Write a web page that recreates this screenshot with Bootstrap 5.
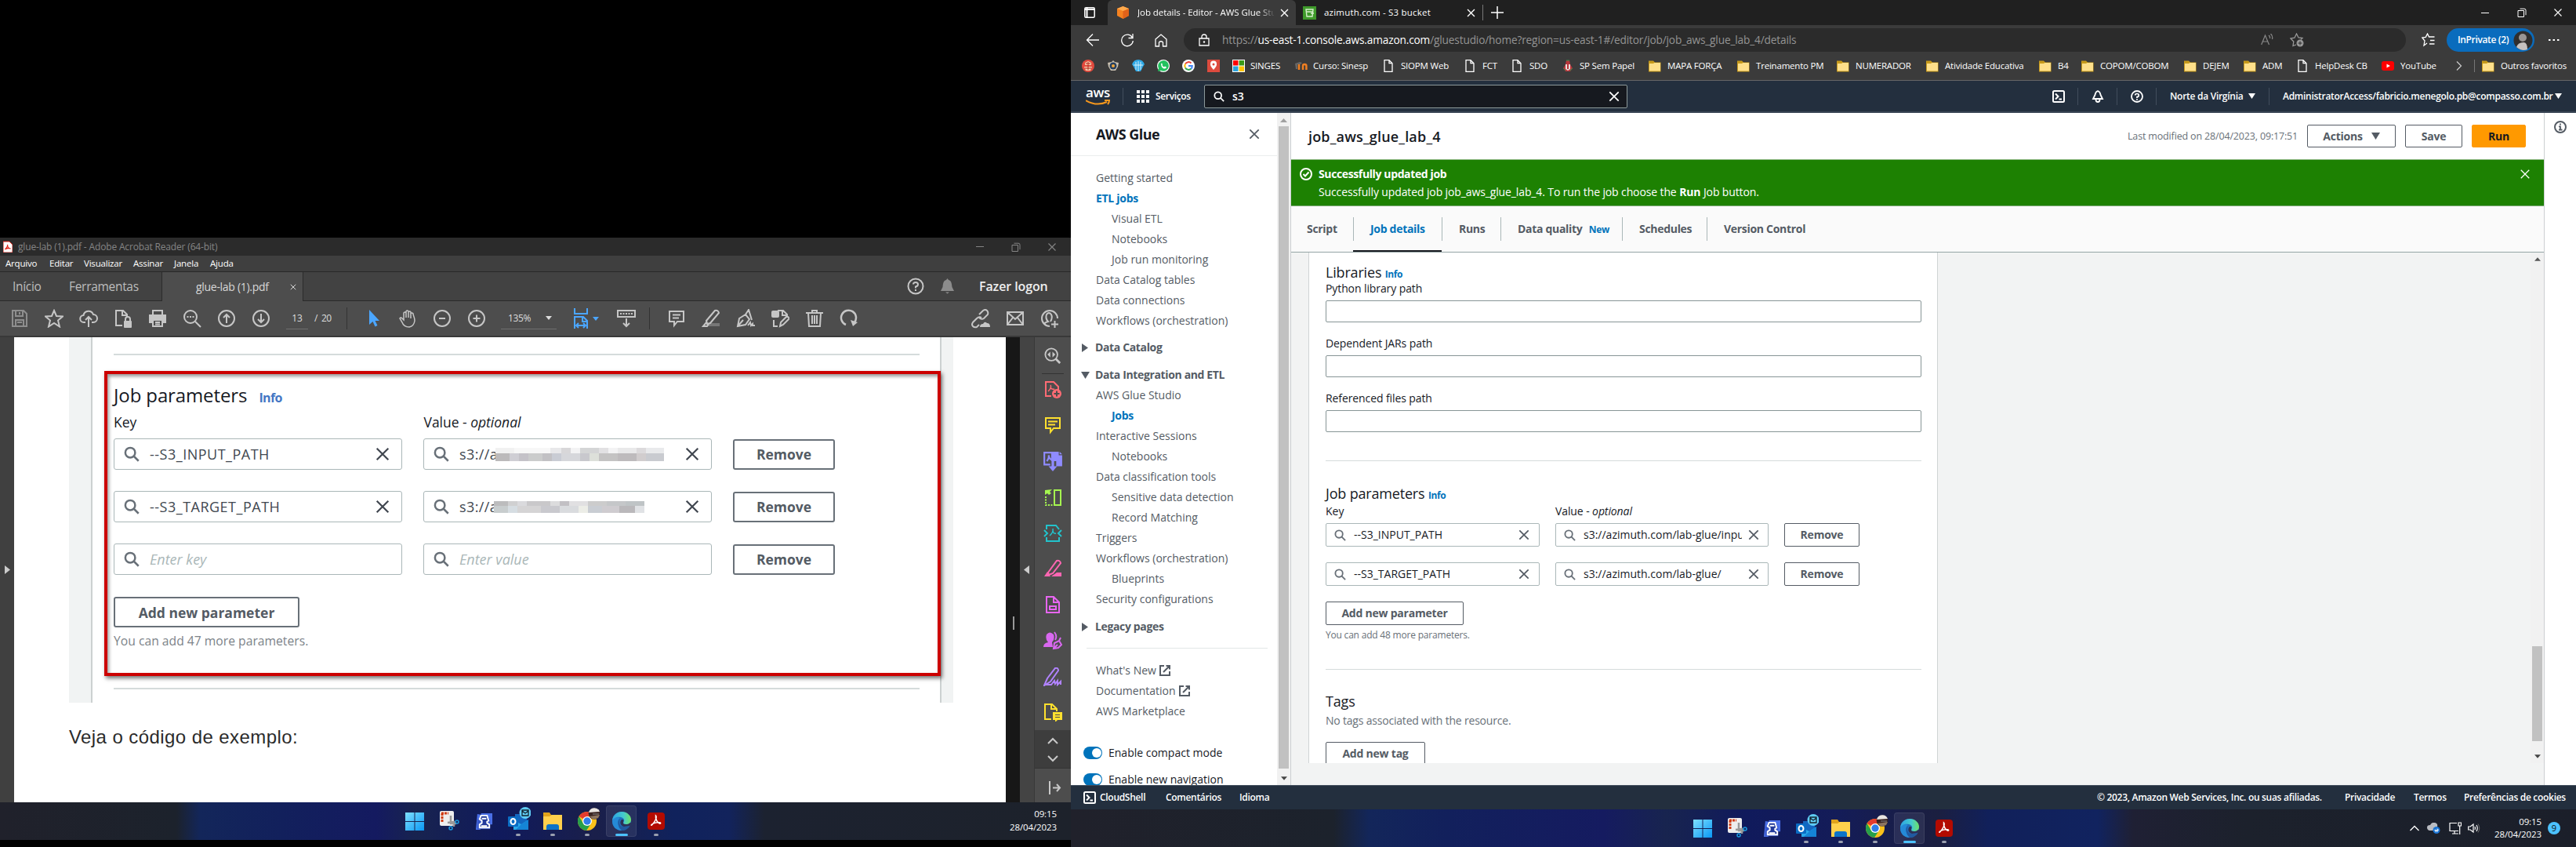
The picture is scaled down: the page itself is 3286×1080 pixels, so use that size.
<!DOCTYPE html>
<html lang="pt-BR">
<head>
<meta charset="utf-8">
<title>Job details - Editor - AWS Glue Studio</title>
<link rel="stylesheet" href="https://cdn.jsdelivr.net/npm/bootstrap@5.3.0/dist/css/bootstrap.min.css">
<style>
*{box-sizing:border-box}
html,body{width:3286px;height:1080px;overflow:hidden;background:#000}
body{font-family:"Open Sans","Noto Sans",sans-serif;font-size:14px;line-height:20px;color:#16191f;margin:0}
svg{display:block;flex:none}
.sprites{position:absolute;width:0;height:0}
.ln{fill:none;stroke:currentColor;stroke-width:2}
.nw{white-space:nowrap}
.g{display:grid;align-items:center;white-space:nowrap}
.left-mon{width:1366px;height:1080px;padding-top:303px;background:#000}
.right-mon{width:1920px;height:1080px}
/* ---- Acrobat window ---- */
.ac-title{height:23px;background:#2b2b2b;color:#858585;font-size:12px;letter-spacing:-.16px;grid-template-columns:23px 1218px 45px 46px 1fr;padding-left:0}
.ac-menu{height:20px;background:#3f3f3f;color:#fff;font-size:11.5px;letter-spacing:-.2px;grid-template-columns:56px 44px 63px 52px 46px 1fr;padding-left:7px}
.ac-tabs{height:38px;background:#424242;border-top:1px solid #282828;color:#bdbdbd;font-size:15.5px;letter-spacing:-.3px}
.ac-tabs .tabs-l{width:207px;padding-left:16px;border-bottom:1px solid #2b2b2b;border-right:1px solid #2b2b2b;grid-template-columns:72px 1fr}
.ac-tabs .tab-on{width:180px;background:#4d4d4d;padding-left:43px;color:#d8d8d8;border-right:1px solid #2b2b2b;grid-template-columns:120px 1fr;font-size:14px}
.ac-tabs .tabs-r{width:979px;border-bottom:1px solid #2b2b2b;padding-left:770px;grid-template-columns:42px 50px 1fr;color:#c6c6c6}
.logon{font-size:16px;color:#eee;font-weight:600;letter-spacing:-.1px}
.ac-tools{height:46px;background:#4d4d4d;border-bottom:2px solid #393939;color:#c6c6c6;grid-template-columns:3px repeat(8,44px) 87px 12px repeat(4,44px) 9px 71px 10px 50px 58px 13px repeat(6,44px) 124px repeat(3,44px)}
.ac-tools>svg{justify-self:center}
.vsep{width:1px;height:28px;background:#333}
.pgno{font-size:12px;color:#ddd;grid-template-columns:10px 28px 8px 9px 1fr;height:28px}
.uln{border-bottom:1px solid #6f6f6f;height:28px;line-height:28px;text-align:center}
.zoomsel{border-bottom:1px solid #6f6f6f;height:28px;display:flex;align-items:center;padding-left:9px;font-size:12px;letter-spacing:-.4px;color:#ddd}
.caret{width:0;height:0;border:4px solid transparent;border-top:5px solid currentColor;border-bottom:0}
.ac-body{height:593px;background:#fff}
.ac-l{width:18px;background:#404040;padding-left:6px;color:#ccc}
.ac-page{width:1265px;padding-left:70px}
.shot{width:1128px;height:466px;background:#f1f3f3;padding:0 15px 0 28px}
.shot-in{background:#fff;border:solid #ccd1d1;border-width:0 2px;height:466px;padding:21px 26px 0 27px}
.rule{height:2px;background:#d5dbdb}
.redbox{margin:20px -27px 15px -12px;height:389px;border:4px solid #cc0000;box-shadow:2px 3px 5px #0008,inset 2px 3px 4px #0006;padding:14px 0 0 8px}
.pdf-h{font-size:24px;line-height:26px;height:29px;letter-spacing:-.12px}
.pdf-h b{font-size:16px;line-height:1;color:#4477c4;margin-left:9px;letter-spacing:-.6px}
.pdf-lb{font-size:17.5px;line-height:24px;margin-top:6px;grid-template-columns:395.5px 1fr}
.pdf-lb span{letter-spacing:-.02px}
.pdf-row{grid-template-columns:368px 368px 130px;column-gap:27px;height:40px}
.pbox{height:40px;border:1.5px solid #aab7b8;border-radius:3px;display:flex;align-items:center;padding-left:12px;font-size:18px;color:#414750;background:#fff}
.pbox .q{color:#687078;margin-right:13px}
.pbox i{color:#aab7b8}
.pkey{width:288px;letter-spacing:.5px}
.pval{width:55px;letter-spacing:.4px}
.pbtn{height:39px;border:2px solid #687078;border-radius:3px;color:#545b64;font-weight:700;font-size:17.5px;display:flex;align-items:center;justify-content:center;background:#fff;white-space:nowrap}
.mosaic{width:215px;height:17px;margin-left:-9px}
.m1{background:linear-gradient(90deg,#f1f1f1 24px,#f7f7f7 24px 70px,#e8e8ea 70px 84px,#d8d7d9 84px 96px,#f3f3f4 96px 108px,#d4d5d6 108px 132px,#e2e1e3 132px 144px,#f3f3f4 144px 156px,#e9e9ea 156px 180px,#dcdadc 180px 192px,#e9eaec 192px) 0 0/100% 7px no-repeat,linear-gradient(90deg,#bcbabb 18px,#cfced4 18px 30px,#c4c2c8 30px 42px,#cbcccc 42px 60px,#c2c1c4 60px 72px,#c9ccd4 72px 84px,#d6d7db 84px 108px,#c8c8cd 108px 120px,#dde0da 120px 132px,#c4c3c3 132px 156px,#bebbbd 156px 180px,#d1cdce 180px 192px,#c9cbd0 192px) 0 7px/100% 10px no-repeat}
.m2{width:192px;height:15px;margin-left:-11px;background:linear-gradient(90deg,#bcbcbd 18px,#d0d0d1 18px 30px,#dadadd 30px 42px,#c9c8ca 42px 72px,#dcdcdd 72px 84px,#c2c0c4 84px 96px,#e1e0e2 96px 120px,#ccc 120px 144px,#c5c7c9 144px 168px,#bfc4c6 168px) 0 0/100% 6px no-repeat,linear-gradient(90deg,#c8cdce 18px,#d6dde2 18px 30px,#d5d4d5 30px 60px,#c9c9ce 60px 84px,#d9dbde 84px 108px,#ecede7 108px 120px,#c9cdd3 120px 138px,#cfccd0 138px 160px,#bab8bb 160px 180px,#e0e2e5 180px) 0 6px/100% 9px no-repeat}
.veja{font-family:"Liberation Sans",Arial,sans-serif;font-size:24px;line-height:28px;margin-top:30px;color:#2b2b2b;letter-spacing:.42px}
.ac-sb{width:18px;background:#171717;padding-left:9px}
.ac-h{width:19px;background:#444;border-right:1px solid #383838;color:#ccc;padding-left:5px}
.ac-side{width:46px;background:#4d4d4d;display:flex;flex-direction:column;align-items:center;color:#c8c8c8}
.ac-side .sl{height:45.75px;display:flex;align-items:center}
.ac-side .dk{width:46px;height:49px;background:#3d3d3d;border-bottom:1px solid #333;display:flex;flex-direction:column;align-items:center;justify-content:space-between;padding:9px 0 7px}
/* ---- taskbars ---- */
.task{height:48px;position:relative;color:#fff}
.t1{background:linear-gradient(90deg,#20212b 0,#1c222c 225px,#13265a 255px,#12205c 360px,#141a60 480px,#18234f 530px,#101a5c 640px,#1a1f4a 760px,#10225c 860px,#12235c 930px,#1c2230 975px,#1d222b 1366px)}
.t2{background:linear-gradient(90deg,#20212b 0,#1c222c 335px,#13265a 380px,#12205c 480px,#151b60 680px,#18244f 760px,#101a5c 860px,#141c58 980px,#1b1f40 1105px,#11205a 1170px,#11235f 1310px,#1f2034 1355px,#1c212c 1500px,#1b1f2a 1920px)}
.ti{width:44px;height:48px;display:flex;align-items:center;justify-content:center;position:relative}
.ti.run::after{content:"";position:absolute;bottom:5px;left:19px;width:6px;height:3px;border-radius:2px;background:#9aa0b0}
.ti.act::before{content:"";position:absolute;left:2px;top:4px;width:39px;height:40px;border-radius:4px;background:#ffffff14;border:1px solid #ffffff14}
.ti.act::after{left:14px;width:16px;background:#4cc2ff}
.clk{font-size:11.5px;line-height:16.5px;text-align:right;letter-spacing:-.1px}
/* ---- Edge ---- */
.e-tabs{height:32px;background:#202020;color:#fff;font-size:11.5px;letter-spacing:-.05px}
.e-tab{width:240px;background:#3b3b3b;border-radius:6px 6px 0 0;grid-template-columns:26px 182px 1fr;padding-left:12px}
.fade-t{overflow:hidden;width:174px;-webkit-mask-image:linear-gradient(90deg,#000 155px,transparent 176px)}
.e-tab2{width:238px;grid-template-columns:27px 182px 1fr;padding-left:9px;border-right:0}
.e-bar{height:34px;background:#3b3b3b;color:#fff;padding-top:4px}
.e-url{width:1559px;height:30px;border-radius:15px;background:#2b2b2b;color:#949494;font-size:13.7px;letter-spacing:-.16px;grid-template-columns:49px 1325px 37px 1fr;padding:0 12px 0 0}
.e-priv{width:112px;height:30px;border-radius:15px;background:#0a6cbd;font-size:12px;letter-spacing:-.35px;padding-left:14px;grid-template-columns:71px 1fr}
.e-fav{height:37px;background:#3b3b3b;border-bottom:1px solid #666;color:#fff;font-size:11.5px;letter-spacing:-.2px;padding-left:14px;grid-template-columns:32px 32px 32px 32px 32px 32px 23px 57px 23px 90px 22px 82px 22px 38px 22px 42px 22px 88px 24px 89px 24px 103px 24px 90px 24px 120px 24px 30px 24px 107px 24px 52px 24px 45px 22px 85px 24px 71px 23px 10px 24px 1fr}
/* ---- AWS console ---- */
.a-nav{height:41px;background:#232f3e;border-bottom:2px solid #3a4655;color:#fff;font-size:12px;padding-left:19px;font-weight:600;grid-template-columns:47px 18px 24px 62px 540px 542px 32px 18px 32px 18px 32px 18px 100px 26px 18px 347px 1fr}
.a-nav .vs{width:1px;height:22px;background:#414d5c}
.awslogo{width:33px;height:23px;color:#fff;font-size:17px;line-height:14px;letter-spacing:-.3px}
.awslogo svg{margin-top:2px}
.a-search{height:30px;background:#16191f;border:1px solid #8d9a9b;border-radius:2px;font-size:14px;grid-template-columns:24px 480px 1fr;padding-left:11px}
.a-main{height:857px;background:#fff}
.a-side{width:263px;height:857px;overflow:hidden;color:#545b64}
.a-side .hd{height:55px;border-bottom:1px solid #eaeded;padding-left:32px;grid-template-columns:195px 1fr;font-size:18px;font-weight:700;color:#16191f;letter-spacing:-.55px}
.a-side ul{list-style:none;margin:0;padding:0 0 0 32px}
.a-side li{height:26px;line-height:26px;white-space:nowrap}
.a-side li.in{padding-left:20px}
.a-side li.on{color:#0073bb;font-weight:700;letter-spacing:-.3px}
.sec{font-weight:700;height:26px;line-height:26px;letter-spacing:-.36px;display:flex;align-items:center;padding-left:13px}
.sec svg{margin-right:7px;width:11px}
.tg{display:flex;align-items:center;height:34px;padding-left:16px;color:#16191f;white-space:nowrap}
.tg i{width:24px;height:16px;border-radius:8px;background:#0073bb;margin-right:8px;padding:2px 1px 0 11px}
.tg i::before{content:"";display:block;width:12px;height:12px;border-radius:6px;background:#fff}
.sbar{width:17px;background:#f1f1f1;display:flex;flex-direction:column;align-items:center}
.thumb{width:13px;background:#c1c1c1}
.a-cont{width:1600px;border-left:1px solid #ccd0d2;border-right:1px solid #ccd0d2;background:#f2f3f3}
.a-head{height:59px;background:#fff;padding-left:22px;grid-template-columns:1045px 229px 125px 85px 1fr;font-size:18px;font-weight:600}
.a-head .mut{font-size:12.5px;font-weight:400;letter-spacing:-.16px}
.abtn{height:29px;border:1px solid #545b64;border-radius:2px;background:#fff;color:#545b64;font-size:14px;font-weight:700;letter-spacing:-.22px;display:flex;align-items:center;justify-content:center;white-space:nowrap}
.flash{height:60px;background:#1d8102;color:#fff;border-top:1px solid #86b37a;border-bottom:1px solid #7aa874;padding:6px 17px 0 11px;line-height:23px;letter-spacing:-.12px}
.a-tabs{height:59px;background:#fafafa;border-bottom:1px solid #95a5a6;color:#545b64;font-weight:700;letter-spacing:-.3px;padding-left:20px;grid-template-columns:59px 113px 75px 155px 108px 1fr}
.a-tabs>div{height:58px;line-height:58px}
.a-tabs .s{background:linear-gradient(#aab7b8,#aab7b8) 0 14px/1px 30px no-repeat;padding-left:22px}
.a-tabs .on{color:#0073bb;box-shadow:inset 0 -2px #16191f}
.scroller{height:651px;overflow:hidden}
.panel{width:803px;margin-left:22px;background:#fff;border:solid #d0d4d5;border-width:0 1px;padding:14px 20px 0 21px;height:651px;overflow:hidden}
.h18{font-size:18px;line-height:22px;height:22px;letter-spacing:-.18px;white-space:nowrap}
.h18 b{font-size:12px;line-height:1;color:#0073bb;letter-spacing:-.4px}
.lbl{line-height:20px;margin-bottom:5px;letter-spacing:-.1px}
.tin{height:28px;border:1px solid #879596;border-radius:2px;margin-bottom:17px}
.prow{grid-template-columns:273px 272px 96px;column-gap:20px;height:30px;margin-bottom:20px}
.prow .abtn{height:30px}
.fbox{height:30px;border:1px solid #aab7b8;border-radius:2px;padding-left:10px;grid-template-columns:25px 202px 8px 1fr;overflow:hidden}
.fbox span{overflow:hidden;letter-spacing:0}
.clr{color:#545b64}
.mut{color:#687078}
.a-info{width:40px;padding:10px 0 0 12px;color:#545b64}
.a-foot{height:31px;background:#232f3e;border-top:1px solid #414d5c;color:#fff;font-size:12px;font-weight:600;letter-spacing:-.3px;padding-left:16px;grid-template-columns:21px 84px 94px 1094px 316px 88px 64px 1fr}
.b4{font-weight:600}
</style>
</head>
<body>
<svg class="sprites">
 <defs>
  <linearGradient id="wg" x1="0" y1="0" x2="1" y2="1"><stop offset="0" stop-color="#7fe0ff"/><stop offset="1" stop-color="#0a98f5"/></linearGradient>
  <linearGradient id="eg" x1="0" x2="1"><stop offset="0" stop-color="#1b9de2"/><stop offset=".6" stop-color="#35c6c9"/><stop offset="1" stop-color="#63e05a"/></linearGradient>
 </defs>
 <symbol id="q" viewBox="0 0 16 16"><circle cx="6.5" cy="6.5" r="5" fill="none" stroke="currentColor" stroke-width="2"/><path d="M10 10l5 5" stroke="currentColor" stroke-width="2"/></symbol>
 <symbol id="x" viewBox="0 0 16 16"><path d="M1.5 1.5l13 13M14.500 1.500l-13 13" stroke="currentColor" stroke-width="2" fill="none"/></symbol>
 <symbol id="xt" viewBox="0 0 16 16"><path d="M2 2l12 12M14 2L2 14" stroke="currentColor" stroke-width="1.500" fill="none"/></symbol>
 <symbol id="rest" viewBox="0 0 12 12"><path d="M1 3.500h7.500V11.500H1zM3.500 1.200h5.500q2 0 2 2v6" fill="none" stroke="currentColor"/></symbol>
 <symbol id="fold" viewBox="0 0 16 16"><path d="M0 1.500h6l2 2h7.500v12H0z" fill="#c79a1b"/><path d="M1 5h5l1.500-1H15v10.500H1z" fill="#ffe08a"/></symbol>
 <symbol id="pg" viewBox="0 0 12 16"><path d="M1 .7h6l4 4v10.600H1zM7 .7v4h4" fill="none" stroke="#fff" stroke-width="1.300"/></symbol>
 <symbol id="ext" viewBox="0 0 14 14"><path d="M6 1H1v12h12V8M8.500 1H13v4.500M13 1L5 9" fill="none" stroke="currentColor" stroke-width="2"/></symbol>
 <symbol id="shell" viewBox="0 0 16 16"><rect x="1" y="1" width="14" height="14" rx="1.500" fill="none" stroke="#fff" stroke-width="2"/><path d="M4 4.500L7.500 8 4 11.500M8.500 11.500H12" stroke="#fff" stroke-width="2" fill="none"/></symbol>
 <symbol id="w-win" viewBox="0 0 24 24"><path d="M0 1h11.500v11H0zM12.500 1H24v11H12.500zM0 13h11.500v11H0zM12.500 13H24v11H12.500z" fill="url(#wg)"/></symbol>
 <symbol id="w-snip" viewBox="0 0 26 26"><rect x="1" y="0" width="18" height="19" rx="2" fill="#eee"/><path d="M3 3h9M4 3v11" stroke="#d13b12" stroke-width="3" stroke-dasharray="3 1" fill="none"/><path d="M15 6v10h7M11 15l8-1v6" fill="none" stroke="#999" stroke-width="2.500"/><circle cx="23" cy="14" r="2" fill="none" stroke="#1a9be0" stroke-width="1.500"/><circle cx="15" cy="22" r="2" fill="none" stroke="#1a9be0" stroke-width="1.500"/></symbol>
 <symbol id="w-robo" viewBox="0 0 24 24"><path d="M3 2l6 1L7 23H1zM8 1h15v15H8z" fill="#4a6fe6"/><path d="M3 9h17v13H3z" fill="#3655c8"/><path d="M8 4h8l2 7-2 1v2l3 2v4H6v-4l3-2v-3L6 9z" fill="#223a9a" stroke="#fff" stroke-width="2"/><path d="M9 8h6M8 18h8" stroke="#fff" stroke-width="2"/></symbol>
 <symbol id="w-out" viewBox="0 0 32 32"><path d="M12 9h15v16H12z" fill="#1466c0"/><path d="M10 17l10 5 9-6v13H10z" fill="#28a8ea"/><path d="M20 22l9-6v13H13z" fill="#1584d6"/><rect x="3" y="12" width="13" height="13" rx="1" fill="#0a6cc4"/><ellipse cx="9.500" cy="18.500" rx="3" ry="3.600" fill="none" stroke="#fff" stroke-width="2"/><circle cx="25" cy="7.500" r="7.500" fill="#60cdf5"/><path d="M21 4h8v7h-8zM21 5l4 3 4-3" fill="none" stroke="#12222e" stroke-width="1.300"/></symbol>
 <symbol id="w-fold" viewBox="0 0 24 24"><path d="M0 1h8l2 3h14v6H0z" fill="#e0a21b"/><path d="M0 6h8l3-2h13v19H0z" fill="#ffd04c"/><path d="M4 23v-4q0-3 3-3h10q3 0 3 3v4z" fill="#0c73c8"/></symbol>
 <symbol id="w-chr" viewBox="0 0 30 30"><circle cx="13" cy="17" r="12" fill="#fbc11a"/><path d="M13 17L2.600 11A12 12 0 0 1 23.400 11H13z" fill="#e33b2e"/><path d="M2.600 11A12 12 0 0 0 12 29l6-9-5-3-5 3z" fill="#26a04b"/><circle cx="13" cy="17" r="6" fill="#fff"/><circle cx="13" cy="17" r="4.700" fill="#2f7de9"/><circle cx="22" cy="7.500" r="7.300" fill="#3a2522"/><path d="M15 6a7.300 7.300 0 0 1 14-1z" fill="#e9e5e2"/><path d="M16 11l13-2-2 4-6 2z" fill="#8d7560"/><path d="M20 8h8" stroke="#888"/></symbol>
 <symbol id="w-edge" viewBox="0 0 24 24"><circle cx="12" cy="12" r="12" fill="#0c63b8"/><path d="M0 12c1-5 6-6 10-4-4 2-5 10 4 15l-2 1C5 24 0 19 0 12z" fill="#1380d4"/><path d="M10 9c-3 5 0 11 6 10l6-1c-3 5-7 6-10 6-5-4-6-12-2-15z" fill="#0f4b98"/><path d="M24 14c0 2-1 4-2 4l-7 1c-5-1-6-6-3-9l2 0c1 2-1 3 1 5z" fill="#1b1f48"/><path d="M0 11C1 4 6 0 12 0c7 0 12 5 12 10 0 4-3 6-6.500 6-3 0-4-1-3-2.500C16 11 15 8 11 7 6 6 1 8 0 12z" fill="url(#eg)"/></symbol>
 <symbol id="w-pdf" viewBox="0 0 22 22"><rect width="22" height="22" rx="4" fill="#b30b00"/><path d="M10.500 4c2 2-1 8-5 12-2 1 0-2 5-3 4-1 7 0 6 1s-5-2-6-7c0-2 0-3 0-3z" fill="none" stroke="#fff" stroke-width="1.500"/></symbol>
</svg>

<div class="d-flex">
<!-- left monitor -->
<section class="left-mon">
 <div class="ac-title g"><svg width="12" height="15" style="margin-left:4px" viewBox="0 0 12 15"><path d="M0 1h8l4 4v10H0z" fill="#fff" stroke="#e1251b"/><path d="M5.500 5c1 2-1 4-3 6 2-1.500 4-2 7-1-2 0-4-2-4-5z" fill="none" stroke="#e1251b" stroke-width="1.300"/></svg><span>glue-lab (1).pdf - Adobe Acrobat Reader (64-bit)</span><svg width="12" height="12" style="margin-left:4px" viewBox="0 0 12 12"><path d="M0 5.500h10" stroke="currentColor"/></svg><svg width="12" height="12" style="margin-left:4px"><use href="#rest"/></svg><svg width="12" height="12" style="margin-left:4px"><use href="#xt"/></svg></div>
 <div class="ac-menu g"><span>Arquivo</span><span>Editar</span><span>Visualizar</span><span>Assinar</span><span>Janela</span><span>Ajuda</span></div>
 <div class="ac-tabs d-flex">
  <div class="tabs-l g"><span>Início</span><span>Ferramentas</span></div>
  <div class="tab-on g"><span>glue-lab (1).pdf</span><svg width="8" height="8"><use href="#x"/></svg></div>
  <div class="tabs-r g"><svg width="22" height="22" viewBox="0 0 22 22"><circle cx="11" cy="11" r="9.500" class="ln"/><path d="M8 8.500q0-2.500 3-2.500t3 2.500-3 3v2M11 15v2" class="ln"/></svg><svg width="19" height="20" viewBox="0 0 19 20"><path d="M9.500 0l1.500 2c4 1 4 5 4.500 9L18 16H1l2.500-5c.5-4 .5-8 4.500-9zM7 17.500h5l-2.500 2z" fill="#8c8c8c"/></svg><span class="logon">Fazer logon</span></div>
 </div>
 <div class="ac-tools g"><i></i>
  <svg width="24" height="24" viewBox="0 0 24 24" color="#8e8e8e"><path d="M3 2h14l4 4v16H3zM7 2v7h9V2M12 4v3M7 22v-8h10v8M9 17h6" class="ln"/></svg>
  <svg width="24" height="24" viewBox="0 0 24 24"><path d="M12 2l3 7 8 .5-6 5 2 8-7-4.500-7 4.500 2-8-6-5L9 9z" class="ln"/></svg>
  <svg width="24" height="24" viewBox="0 0 24 24"><path d="M8 17H6a4.500 4.500 0 0 1-.5-9 6.500 6.500 0 0 1 12.500-1 5 5 0 0 1 0 10h-2M12 23V11M8 14l4-4 4 4" class="ln"/></svg>
  <svg width="24" height="24" viewBox="0 0 24 24"><path d="M11 21H3V2h9l5 5v3M11 2v6h6" class="ln"/><rect x="13" y="15" width="10" height="9" rx="1" fill="currentColor"/><path d="M15 15v-2a3 3 0 0 1 6 0v2" class="ln"/></svg>
  <svg width="24" height="24" viewBox="0 0 24 24"><path d="M6 7V2h12v5" class="ln"/><path d="M1 7h22v11h-4v-4H5v4H1z" fill="currentColor"/><path d="M6 14h12v8H6zM9 17h6M9 19.500h6" class="ln"/></svg>
  <svg width="24" height="24" viewBox="0 0 24 24"><circle cx="10" cy="10" r="8" class="ln"/><path d="M16 16l7 7M5.500 10h2M9 10h2M12.500 10h2" class="ln"/></svg>
  <svg width="24" height="24" viewBox="0 0 24 24"><circle cx="12" cy="12" r="10" class="ln"/><path d="M12 18V7M8 11l4-4 4 4" class="ln"/></svg>
  <svg width="24" height="24" viewBox="0 0 24 24"><circle cx="12" cy="12" r="10" class="ln"/><path d="M12 6v11M8 13l4 4 4-4" class="ln"/></svg>
  <div class="pgno g"><i></i><span class="uln">13</span><i></i><span>/</span><span style="letter-spacing:-.5px">20</span></div>
  <i class="vsep"></i>
  <svg width="24" height="24" viewBox="0 0 24 24"><path d="M7 1v19l4.500-4 3 6.500 3-1.500-3-6H20z" fill="#4ba6ff"/></svg>
  <svg width="24" height="24" viewBox="0 0 24 24"><path d="M7 14V5q1.500-2 3 0v6V3q1.500-2 3 0v8V4q1.500-2 3 0v8V6q1.500-2 3 0c0 3 2 4 2 9q-1 7-7 8-7 0-9-6l-3-5q1-2 3 0z" class="ln" style="stroke-width:1.500"/></svg>
  <svg width="24" height="24" viewBox="0 0 24 24"><circle cx="12" cy="12" r="10" class="ln"/><path d="M8 12h8" class="ln"/></svg>
  <svg width="24" height="24" viewBox="0 0 24 24"><circle cx="12" cy="12" r="10" class="ln"/><path d="M7.500 12h9M12 7.500v9" class="ln"/></svg>
  <i></i><div class="zoomsel">135%<i class="caret" style="margin-left:19px"></i></div><i></i>
  <div class="d-flex align-items-center" style="color:#4ba6ff;padding-left:12px"><svg width="19" height="26" viewBox="0 0 19 26"><path d="M1 0v7h16V0M1 26V11h11l5 5v10M11 11v6h6M4 22h11M6 19l-3 3 3 3M12 19l3 3-3 3" class="ln"/></svg><i class="caret" style="margin-left:5px"></i></div>
  <svg width="24" height="24" viewBox="0 0 24 24"><rect x="1" y="2" width="22" height="8" class="ln"/><path d="M4 6h16" stroke="currentColor" stroke-width="2" stroke-dasharray="2 1.500"/><path d="M12 12v10M8 18l4 4 4-4" class="ln"/></svg>
  <i class="vsep"></i>
  <svg width="24" height="24" viewBox="0 0 24 24"><path d="M3 3h18v13h-8l-4 5v-5H3zM7 7.500h10M7 11.500h8" class="ln"/></svg>
  <svg width="24" height="24" viewBox="0 0 24 24"><path d="M10 18h13v4H6z" fill="#777"/><path d="M6 15L17 2q4-1 5 3L11 18l-4 1zM7 16l-5 6h5l2-3" class="ln"/></svg>
  <svg width="24" height="24" viewBox="0 0 24 24"><path d="M2 22L4 12l8-5 5 6-5 7zM12 7l4-6 4 13M2 22l7-8M15 21l3-4 1 4 2-2v2h3" class="ln"/></svg>
  <svg width="24" height="24" viewBox="0 0 24 24"><rect x="1" y="2" width="10" height="9" rx="2" fill="currentColor"/><path d="M9 2h7l5 5v4M15 2v6h5M4 14v8h5M12 22l1-5 8-8 3 3-8 8z" class="ln"/></svg>
  <svg width="24" height="24" viewBox="0 0 24 24"><path d="M1 5h22M9 5V2h6v3M4 5l1 17h14l1-17M9 8v11M12 8v11M15 8v11" class="ln"/></svg>
  <svg width="24" height="24" viewBox="0 0 24 24"><path d="M8 20A9.500 9.500 0 1 1 19 17" class="ln" style="stroke-width:2.500"/><path d="M14 14l9 3-6 5z" fill="currentColor"/></svg>
  <i></i>
  <svg width="26" height="26" viewBox="0 0 26 26"><path d="M11 8l5-5q3-2 5 0t1 5l-5 5q-3 2-6-1M14 12q-3-2-6 1l-5 5q-2 3 0 5t5 1l3-3" class="ln"/><path d="M12 24q0-4 4-4 2-4 5-1 4 0 4 5z" fill="currentColor"/></svg>
  <svg width="24" height="24" viewBox="0 0 24 24"><path d="M2 4h20v16H2zM2 4l10 9L22 4M2 20l7-9M22 20l-7-9" class="ln"/></svg>
  <svg width="24" height="24" viewBox="0 0 24 24"><path d="M12 22A10 10 0 1 1 22 12" class="ln"/><path d="M5 19q1-2 5-3-4-4-2-9 3-4 6 0 2 4-1 9" class="ln"/><path d="M14 19.500h9M18.500 15v9" class="ln"/></svg>
 </div>
 <div class="ac-body d-flex">
  <div class="ac-l"><svg width="7" height="11" style="margin-top:291px" viewBox="0 0 7 11"><path d="M0 0l7 5.500L0 11z" fill="#ccc"/></svg></div>
  <div class="ac-page">
   <div class="shot"><div class="shot-in">
    <div class="rule"></div>
    <div class="redbox">
     <div class="pdf-h nw">Job parameters <b>Info</b></div>
     <div class="pdf-lb g"><span>Key</span><span>Value - <i>optional</i></span></div>
     <div class="pdf-row g" style="margin-top:9px">
      <div class="pbox"><svg class="q" width="20" height="20"><use href="#q"/></svg><span class="pkey">--S3_INPUT_PATH</span><svg width="18" height="18"><use href="#x"/></svg></div>
      <div class="pbox"><svg class="q" width="20" height="20"><use href="#q"/></svg><span class="pval">s3://a</span><i class="mosaic m1"></i><svg width="18" height="18" style="margin-left:27px"><use href="#x"/></svg></div>
      <div class="pbtn">Remove</div></div>
     <div class="pdf-row g" style="margin-top:27px">
      <div class="pbox"><svg class="q" width="20" height="20"><use href="#q"/></svg><span class="pkey">--S3_TARGET_PATH</span><svg width="18" height="18"><use href="#x"/></svg></div>
      <div class="pbox"><svg class="q" width="20" height="20"><use href="#q"/></svg><span class="pval">s3://a</span><i class="mosaic m2"></i><svg width="18" height="18" style="margin-left:52px"><use href="#x"/></svg></div>
      <div class="pbtn">Remove</div></div>
     <div class="pdf-row g" style="margin-top:27px">
      <div class="pbox"><svg class="q" width="20" height="20"><use href="#q"/></svg><i>Enter key</i></div>
      <div class="pbox"><svg class="q" width="20" height="20"><use href="#q"/></svg><i>Enter value</i></div>
      <div class="pbtn">Remove</div></div>
     <div class="pbtn" style="width:237px;margin-top:28px">Add new parameter</div>
     <div class="nw" style="font-size:15.700px;line-height:22px;margin-top:6px;color:#7c8389">You can add 47 more parameters.</div>
    </div>
    <div class="rule"></div>
   </div></div>
   <div class="veja">Veja o código de exemplo:</div>
  </div>
  <div class="ac-sb"><div style="width:2px;height:17px;background:#999;margin-top:356px"></div></div>
  <div class="ac-h"><svg width="7" height="11" style="margin-top:291px" viewBox="0 0 7 11"><path d="M7 0L0 5.500 7 11z" fill="#ccc"/></svg></div>
  <div class="ac-side">
   <div class="sl"><svg width="22" height="22" viewBox="0 0 24 24"><circle cx="10" cy="11" r="8.500" class="ln"/><path d="M16 17l6 6" class="ln" style="stroke-width:3"/><path d="M8.500 7v8l-4-4zM11.500 7v8l4-4z" fill="currentColor"/></svg></div>
   <div style="width:28px;height:1px;background:#333;margin-bottom:-3px"></div>
   <div class="sl" style="color:#ff6b74"><svg width="24" height="24" viewBox="0 0 24 24"><path d="M10 20H3V2h10l6 6v4" class="ln"/><path d="M9 6c2 3-1 6-3 8M9 9q1 3 5 2" class="ln" style="stroke-width:1.500"/><circle cx="17" cy="17" r="6" fill="currentColor"/><path d="M13.500 17h7M17 13.500v7" stroke="#4d4d4d" stroke-width="2"/></svg></div>
   <div class="sl" style="color:#ffe02e"><svg width="24" height="24" viewBox="0 0 24 24"><path d="M3 3h18v13h-8l-4 5v-5H3zM6 7.500h12M6 11.500h9" class="ln"/></svg></div>
   <div class="sl" style="color:#8f8bff"><svg width="26" height="26" viewBox="0 0 24 24"><path d="M9 16H2V2h9v10" class="ln"/><path d="M5 12q3-4 2-7 1 5 4 5" class="ln"/><path d="M12 1h7v4h4v13h-7v-6h-4zM20 1l3 3h-3z" fill="currentColor"/><path d="M12 12v7" class="ln" style="stroke-width:3"/><path d="M7 18h10l-5 6z" fill="currentColor"/></svg></div>
   <div class="sl" style="color:#a5f650"><svg width="24" height="24" viewBox="0 0 24 24"><path d="M14 3h8v19h-8z" class="ln"/><path d="M3 11v11h9" class="ln" stroke-dasharray="2 1.500"/><path d="M2 3l9-1-3 3 2 2-3 2-2-2-3 2z" fill="currentColor"/></svg></div>
   <div class="sl" style="color:#22c3cc"><svg width="24" height="24" viewBox="0 0 24 24"><path d="M4 7V2h12l4 5M4 17v5h16v-5M1 8l4 4-4 4M23 8l-4 4 4 4" class="ln"/><path d="M12 6c1 5-2 7-4 9M12 9q1 4 4 3" class="ln" style="stroke-width:1.500"/></svg></div>
   <div class="sl" style="color:#ff66b2"><svg width="24" height="24" viewBox="0 0 24 24"><path d="M6 17L17 2q4-1 5 3L12 18l-5 2z" class="ln"/><path d="M1 22l4-6 4 6zM10 22l7-5h6v5z" fill="currentColor"/></svg></div>
   <div class="sl" style="color:#e866f2"><svg width="24" height="24" viewBox="0 0 24 24"><path d="M4 2h9l7 7v13H4zM13 2v7h7M8 14h8v4H8z" class="ln"/></svg></div>
   <div class="sl" style="color:#d968f0"><svg width="24" height="24" viewBox="0 0 24 24"><path d="M0 20q0-5 6-6-4-4-2-10 4-5 9 0 2 6-2 10l1 6z" fill="currentColor"/><path d="M14 1q4 5 1 10M13 22l1-7 6-3 3 5-4 4zM20 12l2-4M13 22l5-5" class="ln"/></svg></div>
   <div class="sl" style="color:#b183ff"><svg width="24" height="24" viewBox="0 0 24 24"><path d="M1 23l4-9L15 1q4-1 4 3L9 18zM1 22h9l4-5 1 4 3-4v5l4-4v4" class="ln"/></svg></div>
   <div class="sl" style="color:#ffe02e"><svg width="24" height="24" viewBox="0 0 24 24"><path d="M10 21H2V2h9l6 6v3M10 2v6h7" class="ln"/><path d="M12 12h12v10h-6l-3 3v-3h-3z" fill="currentColor"/><path d="M15 15.500h6M15 18.500h6" stroke="#4d4d4d"/></svg></div>
   <div class="dk"><svg width="14" height="9" viewBox="0 0 14 9"><path d="M1 8l6-6 6 6" class="ln"/></svg><svg width="14" height="9" viewBox="0 0 14 9"><path d="M1 1l6 6 6-6" class="ln"/></svg></div>
   <svg width="16" height="18" style="margin:16px 0 0 5px" viewBox="0 0 16 18"><path d="M1 0v17M5 8.500h9M10 4l4 4.500-4 4.500" class="ln"/></svg>
  </div>
 </div>
 <div class="task t1 d-flex justify-content-between" style="padding-left:507px">
  <div class="d-flex">
   <div class="ti"><svg width="24" height="24"><use href="#w-win"/></svg></div><div class="ti"><svg width="26" height="26"><use href="#w-snip"/></svg></div><div class="ti"><svg width="23" height="23"><use href="#w-robo"/></svg></div><div class="ti run"><svg width="32" height="32" style="margin-top:-5px"><use href="#w-out"/></svg></div><div class="ti run"><svg width="24" height="24"><use href="#w-fold"/></svg></div><div class="ti run"><svg width="30" height="30" style="margin:-4px 0 0 4px"><use href="#w-chr"/></svg></div><div class="ti run act"><svg width="24" height="24"><use href="#w-edge"/></svg></div><div class="ti run"><svg width="22" height="22"><use href="#w-pdf"/></svg></div>
  </div>
  <div class="clk" style="padding:7px 18px 0 0">09:15<br>28/04/2023</div>
 </div>
</section>

<!-- right monitor -->
<section class="right-mon">
 <div class="e-tabs d-flex">
  <div style="width:47px;padding:9px 0 0 17px"><svg width="14" height="14" viewBox="0 0 14 14"><rect x=".8" y=".8" width="12.400" height="12.400" rx="1.500" fill="none" stroke="#fff" stroke-width="1.500"/><path d="M1 3h12M3.500 1v12" fill="none" stroke="#fff" stroke-width="2"/></svg></div>
  <div class="e-tab g"><svg width="15" height="16" viewBox="0 0 15 16"><path d="M7.500 0L15 3v9l-7.500 4L0 12V3z" fill="#f58220"/><path d="M7.500 6v10l7.500-4V3z" fill="#e0621a"/><path d="M0 3l7.500 3L15 3 7.500 0z" fill="#ffa94d"/></svg><div class="fade-t">Job details - Editor - AWS Glue Studio</div><svg width="11" height="11"><use href="#x"/></svg></div>
  <div class="e-tab2 g"><svg width="17" height="17" viewBox="0 0 17 17"><path d="M0 0h17v17H0z" fill="#3f9a2b"/><path d="M4 4h9l-1 9H5zM4 7h9M10 9h4" fill="none" stroke="#d6f0cd" stroke-width="1.400"/></svg><span style="letter-spacing:.2px">azimuth.com - S3 bucket</span><svg width="11" height="11"><use href="#x"/></svg></div>
  <div style="width:1px;height:20px;margin-top:6px;background:#777"></div>
  <svg width="16" height="16" style="margin:8px 0 0 10px" viewBox="0 0 16 16"><path d="M8 0v16M0 8h16" stroke="#fff" stroke-width="1.500"/></svg>
  <div class="ms-auto g" style="grid-template-columns:46px 46px 29px"><svg width="11" height="12" viewBox="0 0 11 12"><path d="M0 6.500h10" stroke="#fff"/></svg><svg width="12" height="12"><use href="#rest"/></svg><svg width="12" height="12"><use href="#xt"/></svg></div>
 </div>
 <div class="e-bar d-flex">
  <div class="g" style="width:144px;height:30px;grid-template-columns:44px 44px 1fr;padding-left:19px"><svg width="18" height="18" viewBox="0 0 18 18"><path d="M17 9H1.500M9 1.500L1.500 9 9 16.500" class="ln" style="stroke-width:1.300"/></svg><svg width="18" height="18" viewBox="0 0 18 18"><path d="M15.500 6A7.300 7.300 0 1 0 16.300 10M16 1v5.500h-5.500" class="ln" style="stroke-width:1.300"/></svg><svg width="16" height="17" viewBox="0 0 16 17"><path d="M1 7l7-6 7 6v9h-4.500v-5q-2.500-2.500-5 0v5H1z" class="ln" style="stroke-width:1.300"/></svg></div>
  <div class="e-url g"><svg width="14" height="16" style="margin-left:19px" viewBox="0 0 14 16"><path d="M1 6h12v9H1zM4 6V4q0-3 3-3t3 3v2" fill="none" stroke="#fff" stroke-width="1.300"/><circle cx="7" cy="10.500" r="1.200" fill="#fff"/></svg><span>https://<span style="color:#fff">us-east-1.console.aws.amazon.com</span>/gluestudio/home?region=us-east-1#/editor/job/job_aws_glue_lab_4/details</span><svg width="16" height="16" viewBox="0 0 16 16"><path d="M.7 14L5.500 2l5 12M2.500 10h6M10 2q2 1.500 1.500 4M12.500 0q3 3 2 7" fill="none" stroke="#8a8a8a" stroke-width="1.200"/></svg><svg width="18" height="18" viewBox="0 0 18 18"><path d="M8 15l-4 1.500.8-5.500L1 7l5-.8L8.500 1 11 6l5 .5-2 2" fill="none" stroke="#999" stroke-width="1.300"/><circle cx="13" cy="13" r="4.500" fill="#999"/><path d="M10.500 13h5M13 10.500v5" stroke="#2b2b2b"/></svg></div>
  <svg width="17" height="18" style="margin:6px 0 0 20px" viewBox="0 0 17 18"><path d="M7 13l-4 3 1-6L.8 6l4.500-.7L7.500 1l2 4h7M11 9.500h5.500M10 14h6.500" class="ln" style="stroke-width:1.300"/></svg>
  <div class="e-priv g" style="margin-left:15px"><span class="b4">InPrivate (2)</span><svg width="25" height="25" viewBox="0 0 25 25"><circle cx="12.500" cy="12.500" r="12" fill="#302e2d"/><circle cx="12" cy="9" r="5" fill="#9a9694"/><path d="M4 21q2-6 9-6 5 0 5 9-7 3-14-3z" fill="#c5c1bf"/></svg></div>
  <svg width="14" height="4" style="margin:13px 0 0 18px" viewBox="0 0 14 4"><path d="M0 2h2.500M5.500 2H8M11 2h2.500" stroke="#fff" stroke-width="2"/></svg>
 </div>
 <div class="e-fav g">
  <svg width="16" height="16" viewBox="0 0 16 16"><circle cx="8" cy="8" r="8" fill="#e2493d"/><path d="M4 4l4-2 4 2v3H4zM3 9h10l-2 5H5z" fill="#f5c9a8"/><path d="M5 5h6M4 11h8M8 3v10" stroke="#b2271e"/></svg>
  <svg width="16" height="16" viewBox="0 0 16 16"><path d="M8 1l2 2 5 1-1 5-3 5H5L2 9 1 4l5-1z" fill="#c9c0b0"/><circle cx="8" cy="8" r="4.500" fill="#26405f"/><circle cx="8" cy="8" r="2" fill="#f2a73a"/></svg>
  <svg width="16" height="16" viewBox="0 0 16 16"><path d="M0 6q2-6 8-6t8 6l-2 3-3 6H5L2 9z" fill="#2fa9e6"/><path d="M5 3v10M8 2v13M11 3v10M2 7h12" stroke="#d9f1fc"/></svg>
  <svg width="16" height="16" viewBox="0 0 16 16"><circle cx="8" cy="8" r="8" fill="#fff"/><path d="M1 15l1-4a6.800 6.800 0 1 1 3 3z" fill="#22c15e"/><path d="M5 5q1-1 2 1l-.5 1q1 2 2.500 2.500l1-1q2 .5 2 1.500-1 2-3.500 1.500Q5 10 5 5z" fill="#fff"/></svg>
  <svg width="16" height="16" viewBox="0 0 16 16"><circle cx="8" cy="8" r="8" fill="#fff"/><path d="M4 5.500a4.800 4.800 0 0 1 7.500-1" fill="none" stroke="#ea4335" stroke-width="2"/><path d="M4 5.500a4.800 4.800 0 0 0 0 5" fill="none" stroke="#fbbc05" stroke-width="2"/><path d="M4 10.500a4.800 4.800 0 0 0 7.500 1" fill="none" stroke="#34a853" stroke-width="2"/><path d="M8 8h4.800q0 2.500-1.500 3.700" fill="none" stroke="#4285f4" stroke-width="2"/></svg>
  <svg width="16" height="16" viewBox="0 0 16 16"><path d="M0 0h16v16H0z" fill="#dd4b3e"/><path d="M8 13Q3.500 8 4 5.500a4 4 0 0 1 8 0Q12.500 8 8 13z" fill="#fff"/><circle cx="8" cy="6" r="1.500" fill="#dd4b3e"/></svg>
  <svg width="16" height="16" viewBox="0 0 16 16"><path d="M0 0h16v16H0z" fill="#fff"/><path d="M1 1h6.500v6.500H1z" fill="#f00"/><path d="M8.500 1H15v6.500H8.500z" fill="#3a9a16"/><path d="M1 8.500h6.500V15H1z" fill="#2ba3dc"/><path d="M8.500 8.500H15V15H8.500z" fill="#ffc400"/></svg><span>SINGES</span>
  <svg width="16" height="16" viewBox="0 0 16 16"><path d="M0 5l6-2 3 1-2 2H3v6H1z" fill="#666"/><path d="M5 13V6M10 13V8q0-2 2.200-2t2.200 2v5" fill="none" stroke="#ef7f22" stroke-width="2.500"/></svg><span>Curso: Sinesp</span>
  <svg width="12" height="16"><use href="#pg"/></svg><span>SIOPM Web</span>
  <svg width="12" height="16"><use href="#pg"/></svg><span>FCT</span>
  <svg width="12" height="16"><use href="#pg"/></svg><span>SDO</span>
  <svg width="14" height="16" viewBox="0 0 14 16"><path d="M5 1h4l1 5 3 5-3 4H4l-3-4 3-5z" fill="#b8343a"/><path d="M4 6h6v6l-3 2-3-2z" fill="#e9dcd8"/><path d="M7 6v6" stroke="#b8343a" stroke-width="2"/><path d="M5 1h4M1 11l3 3M13 11l-3 3" stroke="#3d8a46"/></svg><span>SP Sem Papel</span>
  <svg width="16" height="16"><use href="#fold"/></svg><span>MAPA FORÇA</span>
  <svg width="16" height="16"><use href="#fold"/></svg><span>Treinamento PM</span>
  <svg width="16" height="16"><use href="#fold"/></svg><span>NUMERADOR</span>
  <svg width="16" height="16"><use href="#fold"/></svg><span>Atividade Educativa</span>
  <svg width="16" height="16"><use href="#fold"/></svg><span>B4</span>
  <svg width="16" height="16"><use href="#fold"/></svg><span>COPOM/COBOM</span>
  <svg width="16" height="16"><use href="#fold"/></svg><span>DEJEM</span>
  <svg width="16" height="16"><use href="#fold"/></svg><span>ADM</span>
  <svg width="12" height="16"><use href="#pg"/></svg><span>HelpDesk CB</span>
  <svg width="16" height="12" viewBox="0 0 16 12"><rect width="16" height="12" rx="3" fill="#f00"/><path d="M6.500 3.500L11 6 6.500 8.500z" fill="#fff"/></svg><span>YouTube</span>
  <svg width="8" height="12" viewBox="0 0 8 12"><path d="M1 .5L6.500 6 1 11.500" fill="none" stroke="#ccc" stroke-width="1.200"/></svg>
  <i style="width:1px;height:16px;background:#777"></i>
  <svg width="16" height="16"><use href="#fold"/></svg><span>Outros favoritos</span>
 </div>
 <div class="a-nav g">
  <div class="awslogo">aws<svg width="31" height="8" viewBox="0 0 31 8"><path d="M0 1q14 8 27 2M24 1h6q0 3-2 5" fill="none" stroke="#f7981d" stroke-width="2"/></svg></div>
  <i class="vs"></i>
  <svg width="16" height="16" viewBox="0 0 16 16"><path d="M2 0v16M8 0v16M14 0v16" stroke="#fff" stroke-width="4" stroke-dasharray="4 2"/></svg>
  <span style="letter-spacing:-.35px">Serviços</span>
  <div class="a-search g"><svg width="14" height="14"><use href="#q"/></svg><span>s3</span><svg width="14" height="14"><use href="#x"/></svg></div>
  <i></i><svg width="16" height="16"><use href="#shell"/></svg><i class="vs"></i>
  <svg width="16" height="16" viewBox="0 0 16 16"><path d="M8 1q3 1 3.500 5l2.500 5H2l2.500-5Q5 2 8 1zM5.500 12q0 3 2.500 3t2.500-3" fill="none" stroke="#fff" stroke-width="1.800"/></svg><i class="vs"></i>
  <svg width="16" height="16" viewBox="0 0 16 16"><circle cx="8" cy="8" r="7" fill="none" stroke="#fff" stroke-width="1.800"/><path d="M5.700 6.500Q5.700 4.500 8 4.500t2.300 2-2.300 2V10M8 11v1.800" fill="none" stroke="#fff" stroke-width="1.700"/></svg><i class="vs"></i>
  <span style="letter-spacing:-.28px">Norte da Virgínia</span><svg width="9" height="7" viewBox="0 0 9 7"><path d="M0 0h9L4.500 7z" fill="#fff"/></svg><i class="vs"></i>
  <span style="letter-spacing:-.28px">AdministratorAccess/fabricio.menegolo.pb@compasso.com.br</span><svg width="9" height="7" viewBox="0 0 9 7"><path d="M0 0h9L4.500 7z" fill="#fff"/></svg>
 </div>
 <div class="a-main d-flex">
  <nav class="a-side">
   <div class="hd g"><span>AWS Glue</span><svg width="14" height="14" color="#545b64"><use href="#x"/></svg></div>
   <ul style="padding-top:15px"><li>Getting started</li><li class="on">ETL jobs</li><li class="in">Visual ETL</li><li class="in">Notebooks</li><li class="in">Job run monitoring</li><li>Data Catalog tables</li><li>Data connections</li><li>Workflows (orchestration)</li></ul>
   <div class="sec" style="margin-top:8px"><svg height="11" viewBox="0 0 11 11"><path d="M1 0l8 5.500L1 11z" fill="#545b64"/></svg>Data Catalog</div>
   <div class="sec" style="margin-top:9px"><svg height="9" viewBox="0 0 11 9"><path d="M0 0h11L5.500 9z" fill="#545b64"/></svg>Data Integration and ETL</div>
   <ul><li>AWS Glue Studio</li><li class="in on">Jobs</li><li>Interactive Sessions</li><li class="in">Notebooks</li><li>Data classification tools</li><li class="in">Sensitive data detection</li><li class="in">Record Matching</li><li>Triggers</li><li>Workflows (orchestration)</li><li class="in">Blueprints</li><li>Security configurations</li></ul>
   <div class="sec" style="margin-top:9px"><svg height="11" viewBox="0 0 11 11"><path d="M1 0l8 5.500L1 11z" fill="#545b64"/></svg>Legacy pages</div>
   <div style="height:1px;background:#e3e7e7;margin:14px 12px 15px 20px"></div>
   <ul><li class="d-flex align-items-center">What's New <svg width="14" height="14" class="ms-1"><use href="#ext"/></svg></li><li class="d-flex align-items-center">Documentation <svg width="14" height="14" class="ms-1"><use href="#ext"/></svg></li><li>AWS Marketplace</li></ul>
   <div class="tg" style="margin-top:23px"><i></i>Enable compact mode</div>
   <div class="tg"><i></i>Enable new navigation</div>
  </nav>
  <div class="sbar"><svg width="9" height="5" style="margin:7px 0 5px" viewBox="0 0 9 5"><path d="M0 5h9L4.500 0z" fill="#a0a0a0"/></svg><div class="thumb" style="height:819px"></div><svg width="8" height="5" style="margin-top:10px" viewBox="0 0 9 5"><path d="M0 0h9L4.500 5z" fill="#444"/></svg></div>
  <div class="a-cont">
   <div class="a-head g"><span style="letter-spacing:.18px">job_aws_glue_lab_4</span><span class="mut">Last modified on 28/04/2023, 09:17:51</span><div class="abtn" style="width:113px;gap:11px">Actions<svg width="11" height="9" viewBox="0 0 11 9"><path d="M0 0h11L5.500 9z" fill="#545b64"/></svg></div><div class="abtn" style="width:73px">Save</div><div class="abtn" style="width:69px;background:#f90;border-color:#f90;color:#16191f">Run</div></div>
   <div class="flash d-flex nw"><svg width="16" height="16" style="margin:4px 8px 0 0" viewBox="0 0 16 16"><circle cx="8" cy="8" r="7" fill="none" stroke="#fff" stroke-width="2"/><path d="M4.500 8l2.500 2.500 4.500-5" fill="none" stroke="#fff" stroke-width="2"/></svg><div><b style="letter-spacing:-.38px">Successfully updated job</b><br>Successfully updated job job_aws_glue_lab_4. To run the job choose the <b>Run</b> Job button.</div><svg width="14" height="14" class="ms-auto" style="margin-top:5px"><use href="#xt"/></svg></div>
   <div class="a-tabs g"><div>Script</div><div class="s on">Job details</div><div class="s">Runs</div><div class="s">Data quality <span style="font-size:12px;color:#0073bb;margin-left:5px">New</span></div><div class="s">Schedules</div><div class="s">Version Control</div></div>
   <div class="scroller d-flex">
    <div class="panel">
     <div class="h18">Libraries <b>Info</b></div>
     <div class="lbl">Python library path</div><div class="tin"></div>
     <div class="lbl">Dependent JARs path</div><div class="tin"></div>
     <div class="lbl">Referenced files path</div><div class="tin"></div>
     <div style="height:1px;background:#d5dbdb;margin:36px 0 30px"></div>
     <div class="h18">Job parameters <b>Info</b></div>
     <div class="g" style="grid-template-columns:293px 1fr;margin:2px 0 5px"><span>Key</span><span style="letter-spacing:-.1px">Value - <i>optional</i></span></div>
     <div class="prow g"><div class="fbox g"><svg class="mut" width="15" height="15"><use href="#q"/></svg><span>--S3_INPUT_PATH</span><i></i><svg class="clr" width="14" height="14"><use href="#x"/></svg></div><div class="fbox g"><svg class="mut" width="15" height="15"><use href="#q"/></svg><span>s3://azimuth.com/lab-glue/input</span><i></i><svg class="clr" width="14" height="14"><use href="#x"/></svg></div><div class="abtn">Remove</div></div>
     <div class="prow g"><div class="fbox g"><svg class="mut" width="15" height="15"><use href="#q"/></svg><span>--S3_TARGET_PATH</span><i></i><svg class="clr" width="14" height="14"><use href="#x"/></svg></div><div class="fbox g"><svg class="mut" width="15" height="15"><use href="#q"/></svg><span>s3://azimuth.com/lab-glue/</span><i></i><svg class="clr" width="14" height="14"><use href="#x"/></svg></div><div class="abtn">Remove</div></div>
     <div class="abtn" style="width:176px;height:30px">Add new parameter</div>
     <div class="mut" style="font-size:12px;line-height:18px;letter-spacing:-.2px;margin-top:4px">You can add 48 more parameters.</div>
     <div style="height:1px;background:#d5dbdb;margin:34px 0 29px"></div>
     <div class="h18">Tags</div>
     <div class="mut" style="letter-spacing:-.2px;margin:4px 0 17px">No tags associated with the resource.</div>
     <div class="abtn" style="width:127px;height:30px">Add new tag</div>
    </div>
    <div class="sbar ms-auto"><svg width="8" height="5" style="margin:6px 0 491px" viewBox="0 0 9 5"><path d="M0 5h9L4.500 0z" fill="#555"/></svg><div class="thumb" style="height:121px"></div><svg width="8" height="5" style="margin-top:17px" viewBox="0 0 9 5"><path d="M0 0h9L4.500 5z" fill="#444"/></svg></div>
   </div>
  </div>
  <div class="a-info"><svg width="16" height="16" viewBox="0 0 16 16"><circle cx="8" cy="8" r="7" fill="none" stroke="currentColor" stroke-width="2"/><path d="M8 3.500v2M6 7.300h2v4M6 11.500h4.500" fill="none" stroke="currentColor" stroke-width="1.800"/></svg></div>
 </div>
 <div class="a-foot g"><svg width="16" height="16"><use href="#shell"/></svg><span>CloudShell</span><span>Comentários</span><span>Idioma</span><span>© 2023, Amazon Web Services, Inc. ou suas afiliadas.</span><span>Privacidade</span><span>Termos</span><span>Preferências de cookies</span></div>
 <div class="task t2 d-flex" style="padding-left:784px">
   <div class="ti"><svg width="24" height="24"><use href="#w-win"/></svg></div><div class="ti"><svg width="26" height="26"><use href="#w-snip"/></svg></div><div class="ti"><svg width="23" height="23"><use href="#w-robo"/></svg></div><div class="ti run"><svg width="32" height="32" style="margin-top:-5px"><use href="#w-out"/></svg></div><div class="ti run"><svg width="24" height="24"><use href="#w-fold"/></svg></div><div class="ti run"><svg width="30" height="30" style="margin:-4px 0 0 4px"><use href="#w-chr"/></svg></div><div class="ti run act"><svg width="24" height="24"><use href="#w-edge"/></svg></div><div class="ti run"><svg width="22" height="22"><use href="#w-pdf"/></svg></div>
   <div class="ms-auto g" style="grid-template-columns:22px 28px 24px 20px 74px 8px 36px">
    <svg width="12" height="8" viewBox="0 0 12 8"><path d="M.5 7L6 1.500 11.500 7" fill="none" stroke="#fff" stroke-width="1.300"/></svg>
    <svg width="17" height="14" viewBox="0 0 17 14"><path d="M3 10q-3-1-3-4t4-3q2-4 6-3t3 5v5z" fill="#b9bcc2"/><circle cx="12" cy="9.500" r="4.500" fill="#1a74d4"/><path d="M9.500 9.500h5l-1.500-2M14 11H10" stroke="#fff" fill="none"/></svg>
    <svg width="16" height="16" viewBox="0 0 16 16"><path d="M10 1.500H1v10h11M4 15h8M7 12v3M12 1h3.500v4H12zM13.700 5v11" fill="none" stroke="#fff" stroke-width="1.200"/></svg>
    <svg width="16" height="14" viewBox="0 0 16 14"><path d="M.7 5h2.500L7 2v10L3.200 9H.7zM9 5q1 2 0 4M11 3q2.500 4 0 8" fill="none" stroke="#fff" stroke-width="1.200"/><path d="M13 1.500q3.500 5.500 0 11" fill="none" stroke="#666"/></svg>
    <div class="clk">09:15<br>28/04/2023</div><i></i>
    <svg width="16" height="16" viewBox="0 0 16 16"><circle cx="8" cy="8" r="8" fill="#4cc2ff"/><text x="8" y="12" font-size="11" text-anchor="middle" font-family="Open Sans" fill="#111">9</text></svg>
   </div>
 </div>
</section>
</div>
<script src="https://cdn.jsdelivr.net/npm/bootstrap@5.3.0/dist/js/bootstrap.bundle.min.js"></script>
</body>
</html>
